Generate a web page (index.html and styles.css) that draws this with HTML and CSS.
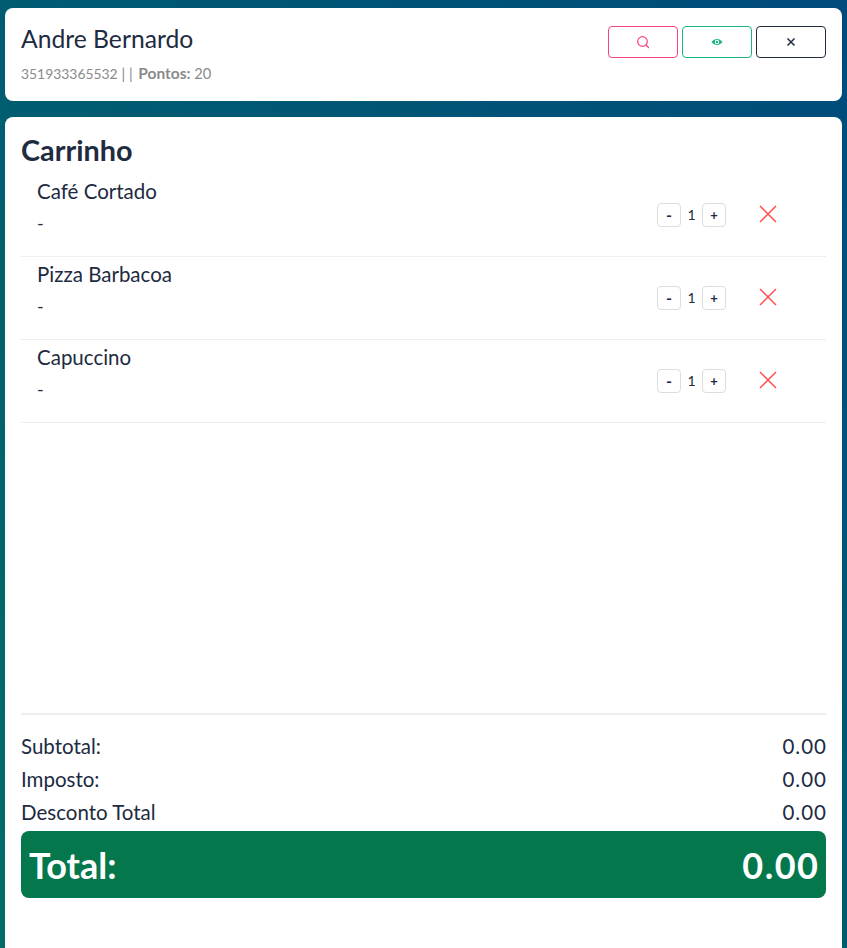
FILE: index.html
```html
<!DOCTYPE html>
<html lang="en">
<head>
    <meta charset="UTF-8">
    <meta name="viewport" content="width=device-width, initial-scale=1.0">
    <title>Carrinho</title>
    <link rel="stylesheet" href="styles.css">
</head>
<body>
    <div class="card customer">
        <div class="customer-info">
            <h2 class="customer-name">Andre Bernardo</h2>
            <p class="customer-meta"><span class="customer-phone">351933365532</span> | | <b>Pontos:</b> 20</p>
        </div>
        <div class="actions">
            <button class="action action-search" aria-label="Procurar">
                <svg width="14" height="14" viewBox="0 0 14 14" fill="none" stroke="currentColor" stroke-width="1.2"><circle cx="6.5" cy="6.5" r="4.8"/><path d="M10 10l2.500 2.500" stroke-linecap="round"/></svg>
            </button>
            <button class="action action-view" aria-label="Ver">
                <svg width="12" height="8" viewBox="0 0 12 8" fill="currentColor"><path d="M6 1C3.500 1 1.500 2.500.5 4c1 1.500 3 3 5.500 3s4.500-1.500 5.500-3C10.500 2.500 8.500 1 6 1zm0 5.200a2.200 2.200 0 1 1 0-4.400 2.200 2.200 0 0 1 0 4.400z"/><circle cx="6" cy="4" r="1.200"/></svg>
            </button>
            <button class="action action-close" aria-label="Fechar">
                <svg width="10" height="10" viewBox="0 0 10 10" fill="none" stroke="currentColor" stroke-width="1.500"><path d="M1.500 1.500l7 7M8.500 1.500l-7 7"/></svg>
            </button>
        </div>
    </div>

    <div class="card cart">
        <h1 class="cart-title">Carrinho</h1>

        <div class="cart-items">
            <div class="item">
                <div class="item-text">
                    <div class="item-name">Café Cortado</div>
                    <div class="item-note">-</div>
                </div>
                <div class="qty">
                    <button class="qty-btn qty-minus">-</button>
                    <span class="qty-value">1</span>
                    <button class="qty-btn">+</button>
                </div>
                <button class="remove" aria-label="Remover">
                    <svg width="18" height="18" viewBox="0 0 18 18" stroke="currentColor" stroke-width="1.500"><path d="M1 1l16 16M17 1 1 17"/></svg>
                </button>
            </div>
            <div class="item">
                <div class="item-text">
                    <div class="item-name">Pizza Barbacoa</div>
                    <div class="item-note">-</div>
                </div>
                <div class="qty">
                    <button class="qty-btn qty-minus">-</button>
                    <span class="qty-value">1</span>
                    <button class="qty-btn">+</button>
                </div>
                <button class="remove" aria-label="Remover">
                    <svg width="18" height="18" viewBox="0 0 18 18" stroke="currentColor" stroke-width="1.500"><path d="M1 1l16 16M17 1 1 17"/></svg>
                </button>
            </div>
            <div class="item">
                <div class="item-text">
                    <div class="item-name">Capuccino</div>
                    <div class="item-note">-</div>
                </div>
                <div class="qty">
                    <button class="qty-btn qty-minus">-</button>
                    <span class="qty-value">1</span>
                    <button class="qty-btn">+</button>
                </div>
                <button class="remove" aria-label="Remover">
                    <svg width="18" height="18" viewBox="0 0 18 18" stroke="currentColor" stroke-width="1.500"><path d="M1 1l16 16M17 1 1 17"/></svg>
                </button>
            </div>
        </div>

        <div class="summary">
            <div class="summary-row"><span>Subtotal:</span><span class="amount">0.00</span></div>
            <div class="summary-row"><span>Imposto:</span><span class="amount">0.00</span></div>
            <div class="summary-row"><span>Desconto Total</span><span class="amount">0.00</span></div>
            <div class="total"><span>Total:</span><span class="total-amount">0.00</span></div>
        </div>
    </div>
</body>
</html>
```

FILE: styles.css
```css
* {
    box-sizing: border-box;
}
html, body {
    height: 100%;
}
body {
    font-family: "Lato", "Open Sans", sans-serif;
    color: #212b3f;
    background: linear-gradient(to bottom left, #004a7c, #006d67);
    margin: 0;
    padding: 8px 5px 0 5px;
    height: 948px;
    overflow: hidden;
    display: flex;
    flex-direction: column;
    gap: 16px;
}
button {
    font-family: inherit;
    background: white;
    cursor: pointer;
    padding: 0;
}
.card {
    background-color: white;
    border-radius: 8px;
}
.customer {
    height: 93px;
    padding: 18px 16px;
    display: flex;
    justify-content: space-between;
    align-items: flex-start;
}
.customer-name {
    font-size: 24.7px;
    font-weight: 400;
    line-height: 26px;
    margin: 0;
}
.customer-meta {
    font-size: 14.7px;
    color: #8a8a8a;
    line-height: 16px;
    margin: 13px 0 0 0;
}
.customer-phone {
    font-size: 13.9px;
}
.customer-meta b {
    font-size: 15.5px;
    margin-left: 2px;
}
.actions {
    display: flex;
    gap: 4px;
}
.action {
    width: 70px;
    height: 32px;
    border: 1px solid;
    border-radius: 4px;
    display: flex;
    align-items: center;
    justify-content: center;
}
.action-search {
    color: #f7457a;
}
.action-view {
    color: #1cb582;
}
.action-close {
    color: #212b3f;
}
.cart {
    flex: 1;
    padding: 16px 16px 0 16px;
    border-radius: 8px 8px 0 0;
    display: flex;
    flex-direction: column;
}
.cart-title {
    font-size: 28.8px;
    font-weight: 700;
    line-height: 34px;
    margin: 0;
}
.cart-items {
    height: 546px;
    padding-top: 7px;
}
.item {
    height: 83px;
    padding-left: 16px;
    display: flex;
    align-items: center;
    border-bottom: 1px solid #eeeeee;
}
.item-text {
    flex: 1;
    align-self: flex-start;
}
.item-name {
    font-size: 20.5px;
    line-height: 26px;
    margin-top: 4px;
}
.item-note {
    font-size: 18px;
    line-height: 20px;
    margin-top: 9px;
}
.qty {
    display: flex;
    align-items: center;
    width: 69px;
    justify-content: space-between;
}
.qty-btn {
    width: 24px;
    height: 24px;
    border: 1px solid #dddddd;
    border-radius: 4px;
    color: #212b3f;
    font-size: 13px;
    font-weight: 700;
    line-height: 20px;
}
.qty-minus {
    font-size: 16px;
}
.qty-value {
    font-size: 14px;
    padding-bottom: 2px;
}
.remove {
    border: none;
    color: #ff4d4f;
    margin: 0 49px 2px 33px;
    width: 18px;
    height: 18px;
    display: flex;
}
.summary {
    border-top: 2px solid #eeeeee;
    padding-top: 19px;
}
.summary-row {
    display: flex;
    justify-content: space-between;
    font-size: 20.5px;
    line-height: 24px;
    margin-bottom: 9px;
}
.summary-row:nth-child(3) {
    margin-bottom: 7px;
}
.amount {
    letter-spacing: 1px;
    margin-right: -1px;
}
.total {
    display: flex;
    justify-content: space-between;
    align-items: center;
    height: 67px;
    padding: 0 8px;
    background-color: #04784c;
    color: white;
    border-radius: 8px;
    font-size: 36px;
    font-weight: 700;
}
.total-amount {
    letter-spacing: 1.5px;
    margin-right: -1.5px;
}
```
